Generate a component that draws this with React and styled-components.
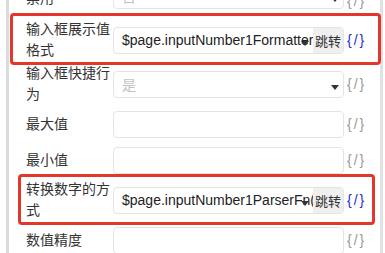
import React from 'react';
import styled, {createGlobalStyle} from 'styled-components';

const GlobalStyle = createGlobalStyle`
  html, body {
    margin: 0;
    padding: 0;
    background: #fff;
    overflow: hidden;
  }
  body {
    font-family: "Liberation Sans", "Noto Sans CJK SC", sans-serif;
    color: #333;
  }
`

const Page = styled.div`
  position: relative;
  width: 385px;
  height: 253px;
  overflow: hidden;
`

const Panel = styled.div`
  display: flex;
  flex-direction: column;
  margin-left: 6px;
  width: 377px;
  height: 253px;
  box-sizing: border-box;
  border-left: 3px solid #dcdcdc;
  border-right: 3px solid #e2e2e2;
  overflow: hidden;
`

const List = styled.div`
  display: flex;
  flex-direction: column;
  margin-top: -19px;
  padding-left: 17px;
`

const Row = styled.div`
  display: flex;
  align-items: ${p => (p.$bottom ? 'flex-end' : 'center')};
  min-height: 36px;
  padding: ${p => (p.$bottom ? '1px 0 9px' : '1px 0')};
  box-sizing: border-box;
`

const Label = styled.div`
  width: 87px;
  flex-shrink: 0;
  font-size: 14px;
  line-height: 21px;
  color: #333;
`

const Field = styled.div`
  display: flex;
  width: 231px;
  height: 27px;
  box-sizing: border-box;
  border: 1px solid #e4e4e4;
  border-radius: 4px;
  overflow: hidden;
  background: #fff;
`

const SelectArea = styled.div`
  position: relative;
  flex: 1;
  min-width: 0;
  display: flex;
  align-items: center;
  padding-left: 8px;
  font-size: 14px;
  white-space: nowrap;
  overflow: hidden;
  color: ${p => (p.$muted ? '#c2c2c2' : '#222')};
`

const Caret = styled.span`
  position: absolute;
  right: 4px;
  top: calc(50% + 1px);
  width: 0;
  height: 0;
  border-left: 4px solid transparent;
  border-right: 4px solid transparent;
  border-top: 5px solid #333;
`

const JumpButton = styled.div`
  display: flex;
  align-items: center;
  justify-content: center;
  width: 30px;
  flex-shrink: 0;
  background: #efefef;
  font-size: 13px;
  color: #333;
`

const Bind = styled.span`
  margin-left: 3px;
  font-family: "Liberation Sans", sans-serif;
  font-size: 14px;
  letter-spacing: 2px;
  color: ${p => (p.$active ? '#1a2fd0' : '#999')};
`

const Mark = styled.div`
  position: absolute;
  box-sizing: border-box;
  border: 3px solid #e4362b;
  border-radius: 4px;
  pointer-events: none;
`

const rows = [
    {label: '禁用', kind: 'select', text: '否', bottom: true},
    {label: '输入框展示值格式', kind: 'bind', text: '$page.inputNumber1Formatter', active: true},
    {label: '输入框快捷行为', kind: 'select', text: '是'},
    {label: '最大值', kind: 'input'},
    {label: '最小值', kind: 'input'},
    {label: '转换数字的方式', kind: 'bind', text: '$page.inputNumber1ParserFn()', active: true},
    {label: '数值精度', kind: 'input'},
];

const marks = [
    {left: 10, top: 13, width: 371, height: 52},
    {left: 18, top: 174, width: 357, height: 51},
];

const FormRow = ({row}) => (
    <Row $bottom={row.bottom}>
        <Label>{row.label}</Label>
        <Field>
            {row.kind === 'input' && <SelectArea/>}
            {row.kind === 'select' && (
                <SelectArea $muted>
                    {row.text}
                    <Caret/>
                </SelectArea>
            )}
            {row.kind === 'bind' && (
                <>
                    <SelectArea>
                        {row.text}
                        <Caret/>
                    </SelectArea>
                    <JumpButton>跳转</JumpButton>
                </>
            )}
        </Field>
        <Bind $active={row.active}>{'{/}'}</Bind>
    </Row>
);

const App = () => {
    return (
        <Page>
            <GlobalStyle/>
            <Panel>
                <List>
                    {rows.map(row => <FormRow key={row.label} row={row}/>)}
                </List>
            </Panel>
            {marks.map((m, i) => (
                <Mark key={i} style={{left: m.left, top: m.top, width: m.width, height: m.height}}/>
            ))}
        </Page>
    );
};

export default App;
